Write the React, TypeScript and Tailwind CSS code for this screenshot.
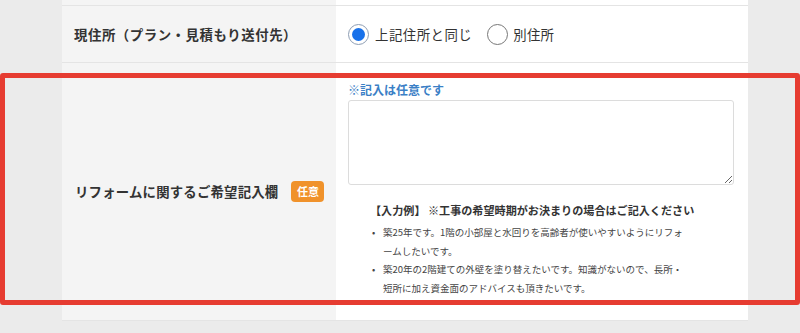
import React from 'react';

const jp = { fontFamily: '"Noto Sans CJK JP", "Noto Sans", sans-serif' };

const examples = [
  ['築25年です。1階の小部屋と水回りを高齢者が使いやすいようにリフォ', 'ームしたいです。'],
  ['築20年の2階建ての外壁を塗り替えたいです。知識がないので、長所・', '短所に加え資金面のアドバイスも頂きたいです。'],
];

const App: React.FC = () => {
  return (
    <div style={jp} className="relative w-[800px] h-[333px] overflow-hidden bg-[#ebebeb] text-[#333]">
      <div className="ml-[62px] w-[686px] bg-white">
        {/* tail of previous row */}
        <div className="grid grid-cols-[274px_1fr] h-[5px]">
          <div className="bg-[#f4f4f4]"></div>
          <div></div>
        </div>

        {/* current address */}
        <div className="grid grid-cols-[274px_1fr] h-[57px] border-t border-[#e4e4e4]">
          <div className="bg-[#f4f4f4] flex items-center pl-[12px]">
            <span className="text-[13.4px] font-bold tracking-[0.55px]">現住所（プラン・見積もり送付先）</span>
          </div>
          <div className="flex items-center pl-[12px] text-[13.4px]">
            <span className="w-[21px] h-[21px] rounded-full border-[1.5px] border-[#8d9db3] bg-white flex items-center justify-center">
              <span className="w-[13px] h-[13px] rounded-full bg-[#1871ea]"></span>
            </span>
            <span className="ml-[6px] tracking-[0.5px]">上記住所と同じ</span>
            <span className="ml-[15px] w-[21px] h-[21px] rounded-full border border-[#777] bg-white"></span>
            <span className="ml-[5px] tracking-[0.3px]">別住所</span>
          </div>
        </div>

        {/* request */}
        <div className="grid grid-cols-[274px_1fr] h-[259px] border-t border-b border-[#e4e4e4]">
          <div className="bg-[#f4f4f4] flex items-center pl-[13px]">
            <span className="text-[13.4px] font-bold tracking-[0.2px]">リフォームに関するご希望記入欄</span>
            <span className="ml-[13px] w-[33px] h-[21px] rounded-[4px] bg-[#f0922b] text-white text-[11px] font-bold flex items-center justify-center">任意</span>
          </div>
          <div className="pl-[12px] pt-[19px]">
            <p className="text-[12px] leading-[16px] font-bold text-[#3b7fc6]">※記入は任意です</p>
            <textarea className="mt-[2px] block w-[386px] h-[85px] border border-[#dcdcdc] rounded-[3px] bg-white"></textarea>
            <div className="pl-[22px] mt-[17px]">
              <p className="text-[11.1px] leading-[16px] font-bold text-[#333] whitespace-nowrap">【入力例】 ※工事の希望時期がお決まりの場合はご記入ください</p>
              <ul className="mt-[5px] text-[9.5px] leading-[18.5px] text-[#444]">
                {examples.map((lines, i) => (
                  <li key={i} className="flex">
                    <span className="w-[13px] pl-[2px]">•</span>
                    <span className="whitespace-nowrap">
                      {lines[0]}
                      <br />
                      {lines[1]}
                    </span>
                  </li>
                ))}
              </ul>
            </div>
          </div>
        </div>
      </div>

      {/* annotation highlight */}
      <div className="absolute left-0 top-[73px] w-[800px] h-[232px] border-[5px] border-[#e63c31] rounded-[3px] pointer-events-none"></div>
    </div>
  );
};

export default App;
